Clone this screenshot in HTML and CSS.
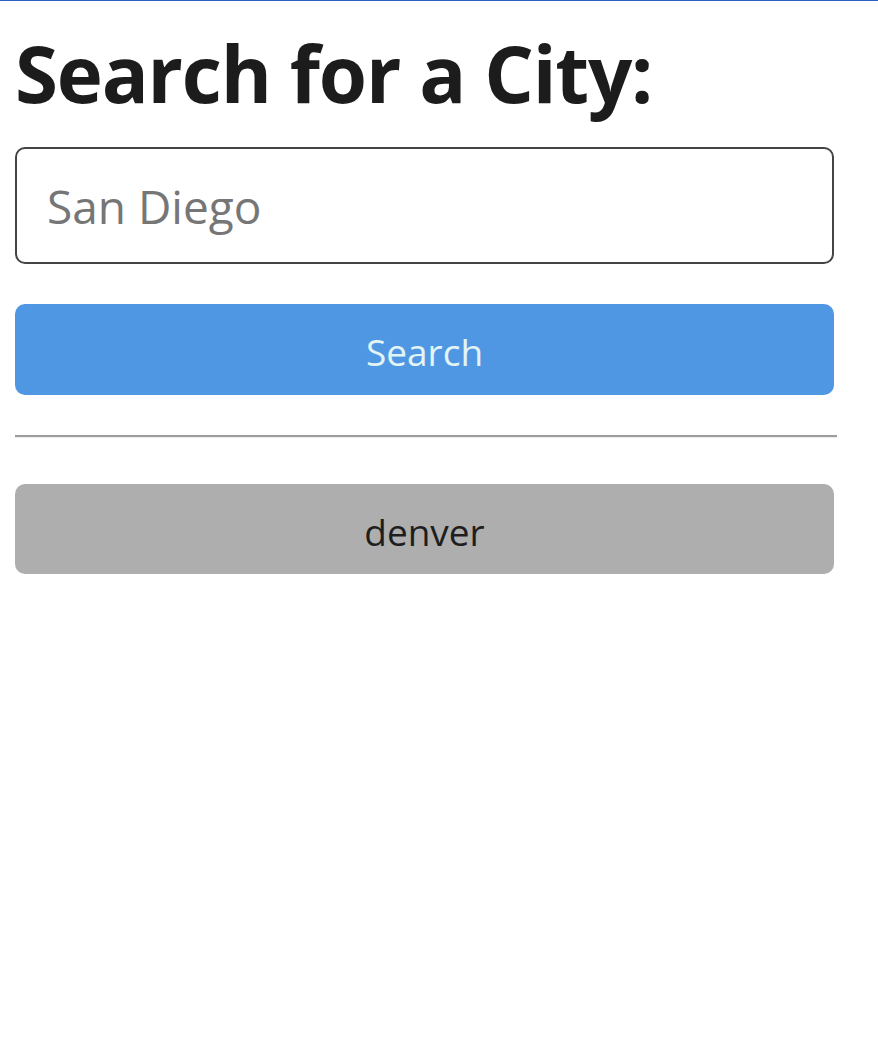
FILE: index.html
```html
<!DOCTYPE html>
<html lang="en">
<head>
<meta charset="utf-8">
<title>Search for a City</title>
<link rel="stylesheet" href="styles.css">
</head>
<body>
<div class="topline"></div>
<main class="page">
  <h1 class="title">Search for a City:</h1>
  <input class="field city-input" type="text" placeholder="San Diego">
  <button class="field btn btn-search" type="button">Search</button>
  <hr class="divider">
  <button class="field btn btn-history" type="button">denver</button>
</main>
</body>
</html>
```

FILE: styles.css
```css
html, body {
  margin: 0;
  padding: 0;
  background: #ffffff;
}

body {
  font-family: "Open Sans", "Noto Sans", sans-serif;
  color: #1c1c1c;
}

.topline {
  height: 1px;
  background: #2f5fc4;
}

.page {
  width: 822px;
  padding-left: 15px;
  display: flex;
  flex-direction: column;
  align-items: flex-start;
}

.title {
  margin: 24px 0 0 0;
  font-size: 78px;
  line-height: 96px;
  font-weight: 700;
  letter-spacing: -1.2px;
  color: #1c1c1c;
}

.field {
  box-sizing: border-box;
  width: 819px;
  font-family: "Open Sans", "Noto Sans", sans-serif;
}

.city-input {
  margin-top: 26px;
  height: 117px;
  border: 2px solid #444444;
  border-radius: 10px;
  padding: 0 0 0 30px;
  font-size: 46px;
  color: #333;
  outline: none;
  background: #fff;
}

.city-input::placeholder {
  color: #767676;
  opacity: 1;
}

.btn {
  border: none;
  border-radius: 10px;
  height: 91px;
  font-size: 37px;
  display: flex;
  align-items: center;
  justify-content: center;
  padding: 0;
  padding-top: 4px;
}

.btn-search {
  margin-top: 40px;
  background: #4f97e3;
  color: #e2f4f4;
}

.divider {
  box-sizing: border-box;
  width: 822px;
  margin: 40px 0 0 0;
  border: 0;
  border-top: 2px solid #9d9d9d;
  border-bottom: 1px solid #ececec;
  height: 3px;
}

.btn-history {
  margin-top: 46px;
  height: 90px;
  background: #aeaeae;
  color: #1e1e1e;
}
```
